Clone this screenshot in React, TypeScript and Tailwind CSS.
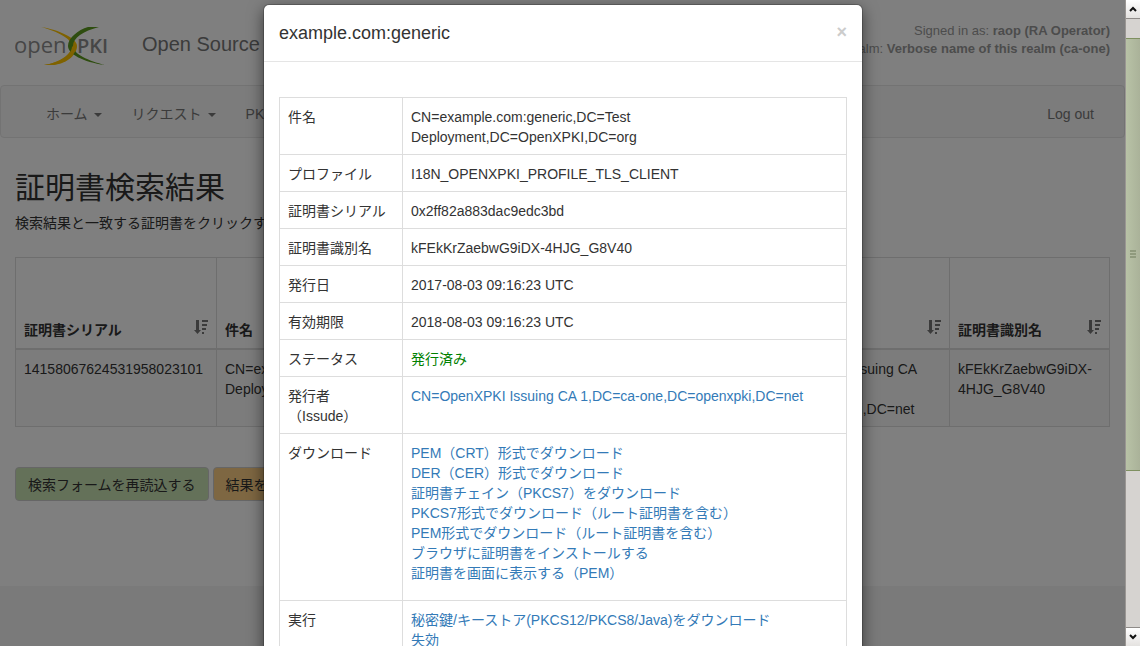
import type { ReactNode } from "react";

const columns = [
  { title: "証明書シリアル", width: "w-[201px]" },
  { title: "件名", width: "w-[200px]" },
  { title: "有効期限", width: "" },
  { title: "発行者（Issude）", width: "w-[207px]" },
  { title: "証明書識別名", width: "w-[160px]" },
];

const downloads = [
  "PEM（CRT）形式でダウンロード",
  "DER（CER）形式でダウンロード",
  "証明書チェイン（PKCS7）をダウンロード",
  "PKCS7形式でダウンロード（ルート証明書を含む）",
  "PEM形式でダウンロード（ルート証明書を含む）",
  "ブラウザに証明書をインストールする",
  "証明書を画面に表示する（PEM）",
];

const actions = ["秘密鍵/キーストア(PKCS12/PKCS8/Java)をダウンロード", "失効"];

const cell = "border border-[#ddd] px-2 pt-[9px] pb-[7px]";

function LinkList({ items }: { items: string[] }) {
  return (
    <ul className="mb-[10px]">
      {items.map((item) => (
        <li key={item}>
          <a href="#" className="text-[#337ab7]">{item}</a>
        </li>
      ))}
    </ul>
  );
}

const details: { label: ReactNode; value: ReactNode }[] = [
  {
    label: "件名",
    value: <p className="max-w-[240px]">CN=example.com:generic,DC=Test Deployment,DC=OpenXPKI,DC=org</p>,
  },
  { label: "プロファイル", value: "I18N_OPENXPKI_PROFILE_TLS_CLIENT" },
  { label: "証明書シリアル", value: "0x2ff82a883dac9edc3bd" },
  { label: "証明書識別名", value: "kFEkKrZaebwG9iDX-4HJG_G8V40" },
  { label: "発行日", value: "2017-08-03 09:16:23 UTC" },
  { label: "有効期限", value: "2018-08-03 09:16:23 UTC" },
  { label: "ステータス", value: <span className="text-[#008000]">発行済み</span> },
  {
    label: <>発行者<br />（Issude）</>,
    value: <a href="#" className="text-[#337ab7]">CN=OpenXPKI Issuing CA 1,DC=ca-one,DC=openxpki,DC=net</a>,
  },
  { label: "ダウンロード", value: <LinkList items={downloads} /> },
  { label: "実行", value: <LinkList items={actions} /> },
];

function Logo() {
  return (
    <svg width="100" height="40" viewBox="0 0 100 40" aria-label="OpenXPKI">
      <text x="-1" y="27" fontSize="22" fill="#8d8d8d" className="font-['Open_Sans',sans-serif] font-normal">open</text>
      <text x="62" y="27" fontSize="20" fill="#8d8d8d" className="font-['Open_Sans',sans-serif] font-semibold">PKI</text>
      <path d="M26 1 C44 4 62 12 62 20 C62 30 49 39 37 39 L29 39 C44 37 57 28 57 20 C57 13 42 5 26 1Z" fill="#fec400" />
      <path d="M84 1 L73 1 C63 4 53 12 53 20 C53 28 68 36 90 39 C74 35 58 28 58 20 C58 12 68 5 84 1Z" fill="#5c9a1e" />
      <path d="M61 17 C64 27 52 37 37 39 L29 39 C44 37 56 30 57 21Z" fill="#fec400" />
    </svg>
  );
}

function SortIcon() {
  return (
    <svg width="14" height="15" viewBox="0 0 14 15" fill="#777" className="shrink-0">
      <path d="M2 0h3v10h2L3.500 14 0 10h2z" />
      <path d="M8 0h6v2H8zM8 4h5v2H8zM8 8h4v2H8zM8 12h2v2H8z" />
    </svg>
  );
}

function Caret() {
  return <span className="ml-[6px] inline-block border-x-4 border-t-4 border-x-transparent border-t-current align-middle" />;
}

function Page() {
  return (
    <>
      <header className="flex h-[85px] items-start justify-between px-[15px]">
        <div className="flex gap-[27px] pt-[26px]">
          <Logo />
          <p className="text-[20px] leading-9 text-[#777] whitespace-nowrap">Open Source Trustcenter</p>
        </div>
        <p className="pt-[22px] text-right text-[13px] leading-[18px] text-[#999]">
          Signed in as: <b>raop (RA Operator)</b>
          <br />
          Realm: <b>Verbose name of this realm (ca-one)</b>
        </p>
      </header>

      <nav className="flex h-[53px] items-center justify-between rounded-[4px] border border-[#e7e7e7] bg-[#f8f8f8] pl-[45px] pr-[30px] pt-1 text-[#777]">
        <div className="flex gap-[30px] whitespace-nowrap">
          <a href="#">ホーム<Caret /></a>
          <a href="#">リクエスト<Caret /></a>
          <a href="#">PKI Operation<Caret /></a>
        </div>
        <a href="#">Log out</a>
      </nav>

      <main className="px-[15px] pt-[30px]">
        <h1 className="text-[30px] leading-10">証明書検索結果</h1>
        <p className="mt-[5px] whitespace-nowrap">検索結果と一致する証明書をクリックすると詳細が表示されます。</p>
        <table className="mt-[24px] w-full table-fixed border-collapse border border-[#ddd]">
          <thead>
            <tr className="h-[91px]">
              {columns.map((column) => (
                <th key={column.title} className={`border border-b-2 border-[#ddd] p-2 text-left align-bottom ${column.width}`}>
                  <div className="flex items-start justify-between">
                    {column.title}
                    <SortIcon />
                  </div>
                </th>
              ))}
            </tr>
          </thead>
          <tbody>
            <tr className="bg-[#f9f9f9] align-top">
              <td className={cell}>14158067624531958023101</td>
              <td className={cell}>CN=example.com:generic,DC=Test Deployment,DC=OpenXPKI</td>
              <td className={cell}>2018-08-03 09:16:23</td>
              <td className={cell}>
                CN=OpenXPKI Issuing CA<br />1,DC=ca-<br />one,DC=openxpki,DC=net
              </td>
              <td className={cell}>kFEkKrZaebwG9iDX-<br />4HJG_G8V40</td>
            </tr>
          </tbody>
        </table>
        <div className="mt-[40px] flex gap-1 whitespace-nowrap">
          <button className="rounded-[4px] border border-[#ccc] bg-[#c9e2b3] px-3 pt-[7px] pb-[5px]">検索フォームを再読込する</button>
          <button className="rounded-[4px] border border-[#ccc] bg-[#fccf85] px-3 pt-[7px] pb-[5px]">結果をエクスポートする</button>
        </div>
      </main>
      <footer className="mt-[85px] h-[100px] bg-[#f5f5f5]" />
    </>
  );
}

function Scrollbar() {
  return (
    <div className="flex h-full w-[15px] shrink-0 flex-col border-l border-[#9a9693] bg-[#d6d3d0]">
      <div className="flex h-[19px] items-center justify-center border-b border-[#8f8b88] bg-linear-to-b from-white to-[#e4e2e0]">
        <svg width="8" height="6" viewBox="0 0 8 6" fill="none" stroke="#111" strokeWidth="2"><path d="M1 5l3-3 3 3" /></svg>
      </div>
      <div className="mt-[19px] flex flex-[432] flex-col items-center justify-center gap-px border-y border-[#7f9060] bg-linear-to-r from-[#b8c2a6] to-[#aab299]">
        <span className="h-[2px] w-[6px] bg-[#8f9a7d]" />
        <span className="h-[2px] w-[6px] bg-[#8f9a7d]" />
        <span className="h-[2px] w-[6px] bg-[#8f9a7d]" />
      </div>
      <div className="flex-[157]" />
      <div className="flex h-[19px] items-center justify-center border-t border-[#8f8b88] bg-linear-to-b from-white to-[#e4e2e0]">
        <svg width="8" height="6" viewBox="0 0 8 6" fill="none" stroke="#111" strokeWidth="2"><path d="M1 1l3 3 3-3" /></svg>
      </div>
    </div>
  );
}

export default function App() {
  return (
    <div className="flex h-screen overflow-hidden bg-white font-['Liberation_Sans','Noto_Sans_CJK_JP',sans-serif] text-[14px] leading-5 text-[#333]" lang="ja">
      <div className="relative min-w-0 flex-1 overflow-hidden">
        <Page />

        {/* Certificate dialog */}
        <div className="absolute inset-0 overflow-hidden bg-black/50 pl-px">
          <div role="dialog" aria-labelledby="dialog-title" className="mx-auto mt-1 max-w-[600px] rounded-[6px] border border-black/20 bg-white bg-clip-padding shadow-[0_5px_15px_rgba(0,0,0,0.5)]">
            <div className="flex items-start justify-between border-b border-[#e5e5e5] p-[15px]">
              <h4 id="dialog-title" className="text-[18px] leading-[26px]">example.com:generic</h4>
              <button aria-label="Close" className="text-[18px] font-bold leading-6 text-[#ccc]">×</button>
            </div>
            <div className="px-[15px] py-[35px]">
              <table className="w-full border-collapse">
                <tbody>
                  {details.map((row, index) => (
                    <tr key={index} className="align-top">
                      <th className={`w-[123px] text-left font-normal ${cell}`}>{row.label}</th>
                      <td className={cell}>{row.value}</td>
                    </tr>
                  ))}
                </tbody>
              </table>
            </div>
          </div>
        </div>
      </div>
      <Scrollbar />
    </div>
  );
}
